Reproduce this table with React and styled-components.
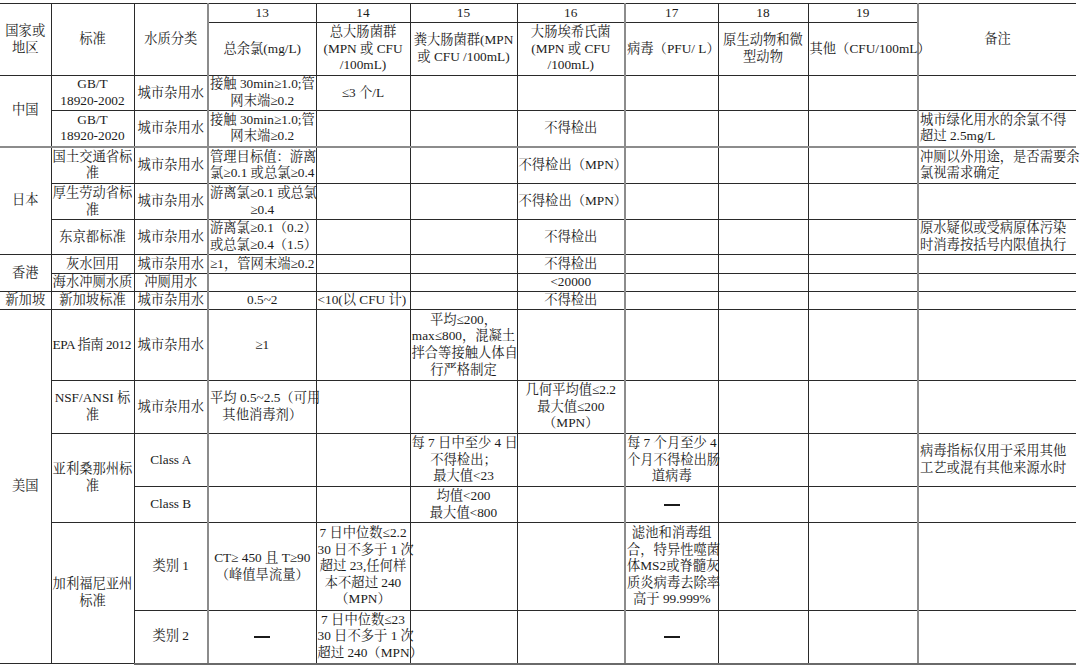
import React from "react";
import styled, { createGlobalStyle } from "styled-components";

const Global = createGlobalStyle`
  html, body { margin: 0; padding: 0; background: #fff; }
  body {
    font-family: "Liberation Serif", "Noto Serif CJK SC", "Noto Sans CJK SC", serif;
    color: #1b1b1b;
  }
`;

const Page = styled.div`
  padding-top: 3px;
  width: 1080px;
`;

const Table = styled.table`
  border-collapse: collapse;
  table-layout: fixed;
  width: 1076px;
  font-size: 13.3px;
  line-height: 16.6px;
`;

const Col = styled.col`
  width: ${(p) => p.$w}px;
  ${(p) => (p.$accent ? "border-left: 2px solid #8c8c8c;" : "")}
`;

const Row = styled.tr`
  height: ${(p) => p.$h}px;
  ${(p) => (p.$accent ? "border-top: 2px solid #8c8c8c;" : "")}
`;

const cellBase = `
  border: 1px solid #2a2a2a;
  padding: 0 1px;
  vertical-align: middle;
  white-space: nowrap;
  font-weight: normal;
  overflow: visible;
  &:first-child { border-left: none; }
  &:last-child { border-right: none; }
`;

const HeadCell = styled.th`
  ${cellBase}
  text-align: ${(p) => p.$align || "center"};
  &.edge-r { border-right: none; }
`;

const Cell = styled.td`
  ${cellBase}
  text-align: ${(p) => p.$align || "center"};
  letter-spacing: ${(p) => (p.$tight ? "-0.4px" : "normal")};
  &.edge-r { border-right: none; }
  &.edge-l { border-left: none; }
`;

const Dash = styled.span`
  display: inline-block;
  width: 16px;
  height: 2px;
  background: #1b1b1b;
  vertical-align: middle;
`;

const Body = styled.tbody`
  tr:last-child td { border-bottom: 2px solid #6a6a6a; }
`;

const Head = styled.thead`
  tr:first-child th { border-top: 1px solid #2a2a2a; }
`;

const E = () => <Cell />;

export default function App() {
  return (
    <Page>
      <Global />
      <Table>
        <colgroup>
          <Col $w={51} />
          <Col $w={83} />
          <Col $w={74} />
          <Col $w={108} $accent />
          <Col $w={94} />
          <Col $w={107} />
          <Col $w={108} />
          <Col $w={93} $accent />
          <Col $w={90} />
          <Col $w={110} />
          <Col $w={158} $accent />
        </colgroup>
        <Head>
          <Row $h={19}>
            <HeadCell rowSpan={2}>国家或<br />地区</HeadCell>
            <HeadCell rowSpan={2}>标准</HeadCell>
            <HeadCell rowSpan={2}>水质分类</HeadCell>
            <HeadCell>13</HeadCell>
            <HeadCell>14</HeadCell>
            <HeadCell>15</HeadCell>
            <HeadCell>16</HeadCell>
            <HeadCell>17</HeadCell>
            <HeadCell>18</HeadCell>
            <HeadCell>19</HeadCell>
            <HeadCell rowSpan={2} className="edge-r">备注</HeadCell>
          </Row>
          <Row $h={53}>
            <HeadCell>总余氯(mg/L)</HeadCell>
            <HeadCell>总大肠菌群<br />(MPN 或 CFU<br />/100mL)</HeadCell>
            <HeadCell>粪大肠菌群(MPN<br />或 CFU /100mL)</HeadCell>
            <HeadCell>大肠埃希氏菌<br />(MPN 或 CFU<br />/100mL)</HeadCell>
            <HeadCell $align="left">病毒（PFU/ L）</HeadCell>
            <HeadCell>原生动物和微<br />型动物</HeadCell>
            <HeadCell $align="left">其他（CFU/100mL）</HeadCell>
          </Row>
        </Head>
        <Body>
          <Row $h={35}>
            <Cell rowSpan={2}>中国</Cell>
            <Cell>GB/T<br />18920-2002</Cell>
            <Cell>城市杂用水</Cell>
            <Cell>接触 30min≥1.0;管<br />网末端≥0.2</Cell>
            <Cell>≤3 个/L</Cell>
            <E /><E /><E /><E /><E />
            <Cell className="edge-r" />
          </Row>
          <Row $h={36}>
            <Cell>GB/T<br />18920-2020</Cell>
            <Cell>城市杂用水</Cell>
            <Cell>接触 30min≥1.0;管<br />网末端≥0.2</Cell>
            <E /><E />
            <Cell>不得检出</Cell>
            <E /><E /><E />
            <Cell $align="left" className="edge-r">城市绿化用水的余氯不得<br />超过 2.5mg/L</Cell>
          </Row>
          <Row $h={37} $accent>
            <Cell rowSpan={3} className="edge-l">日本</Cell>
            <Cell>国土交通省标<br />准</Cell>
            <Cell>城市杂用水</Cell>
            <Cell>管理目标值：游离<br />氯≥0.1 或总氯≥0.4</Cell>
            <E /><E />
            <Cell $align="left">不得检出（MPN）</Cell>
            <E /><E /><E />
            <Cell $align="left" className="edge-r">冲厕以外用途，是否需要余<br />氯视需求确定</Cell>
          </Row>
          <Row $h={36}>
            <Cell>厚生劳动省标<br />准</Cell>
            <Cell>城市杂用水</Cell>
            <Cell>游离氯≥0.1 或总氯<br />≥0.4</Cell>
            <E /><E />
            <Cell $align="left">不得检出（MPN）</Cell>
            <E /><E /><E />
            <Cell className="edge-r" />
          </Row>
          <Row $h={35}>
            <Cell>东京都标准</Cell>
            <Cell>城市杂用水</Cell>
            <Cell $align="left">游离氯≥0.1（0.2）<br />或总氯≥0.4（1.5）</Cell>
            <E /><E />
            <Cell>不得检出</Cell>
            <E /><E /><E />
            <Cell $align="left" className="edge-r">原水疑似或受病原体污染<br />时消毒按括号内限值执行</Cell>
          </Row>
          <Row $h={19}>
            <Cell rowSpan={2} className="edge-l">香港</Cell>
            <Cell>灰水回用</Cell>
            <Cell>城市杂用水</Cell>
            <Cell>≥1，管网末端≥0.2</Cell>
            <E /><E />
            <Cell>不得检出</Cell>
            <E /><E /><E />
            <Cell className="edge-r" />
          </Row>
          <Row $h={18}>
            <Cell>海水冲厕水质</Cell>
            <Cell>冲厕用水</Cell>
            <E /><E /><E />
            <Cell>{"<20000"}</Cell>
            <E /><E /><E />
            <Cell className="edge-r" />
          </Row>
          <Row $h={18}>
            <Cell className="edge-l">新加坡</Cell>
            <Cell>新加坡标准</Cell>
            <Cell>城市杂用水</Cell>
            <Cell>0.5~2</Cell>
            <Cell $align="left">{"<10(以 CFU 计)"}</Cell>
            <E />
            <Cell>不得检出</Cell>
            <E /><E /><E />
            <Cell className="edge-r" />
          </Row>
          <Row $h={71}>
            <Cell rowSpan={6} className="edge-l">美国</Cell>
            <Cell $align="left" $tight>EPA 指南 2012</Cell>
            <Cell>城市杂用水</Cell>
            <Cell>≥1</Cell>
            <E />
            <Cell>平均≤200，<br />max≤800，混凝土<br />拌合等接触人体自<br />行严格制定</Cell>
            <E /><E /><E /><E />
            <Cell className="edge-r" />
          </Row>
          <Row $h={53}>
            <Cell>NSF/ANSI 标<br />准</Cell>
            <Cell>城市杂用水</Cell>
            <Cell>平均 0.5~2.5（可用<br />其他消毒剂）</Cell>
            <E /><E />
            <Cell>几何平均值≤2.2<br />最大值≤200<br />（MPN）</Cell>
            <E /><E /><E />
            <Cell className="edge-r" />
          </Row>
          <Row $h={53}>
            <Cell rowSpan={2}>亚利桑那州标<br />准</Cell>
            <Cell>Class A</Cell>
            <E /><E />
            <Cell>每 7 日中至少 4 日<br />不得检出；<br />最大值{"<23"}</Cell>
            <E />
            <Cell>每 7 个月至少 4<br />个月不得检出肠<br />道病毒</Cell>
            <E /><E />
            <Cell $align="left" className="edge-r">病毒指标仅用于采用其他<br />工艺或混有其他来源水时</Cell>
          </Row>
          <Row $h={36}>
            <Cell>Class B</Cell>
            <E /><E />
            <Cell>均值{"<200"}<br />最大值{"<800"}</Cell>
            <E />
            <Cell><Dash role="img" aria-label="—" /></Cell>
            <E /><E />
            <Cell className="edge-r" />
          </Row>
          <Row $h={88}>
            <Cell rowSpan={2}>加利福尼亚州<br />标准</Cell>
            <Cell>类别 1</Cell>
            <Cell>CT≥ 450 且 T≥90<br />（峰值旱流量）</Cell>
            <Cell>7 日中位数≤2.2<br />30 日不多于 1 次<br />超过 23,任何样<br />本不超过 240<br />（MPN）</Cell>
            <E /><E />
            <Cell>滤池和消毒组<br />合，特异性噬菌<br />体MS2或脊髓灰<br />质炎病毒去除率<br />高于 99.999%</Cell>
            <E /><E />
            <Cell className="edge-r" />
          </Row>
          <Row $h={53}>
            <Cell>类别 2</Cell>
            <Cell><Dash role="img" aria-label="—" /></Cell>
            <Cell>7 日中位数≤23<br />30 日不多于 1 次<br />超过 240（MPN）</Cell>
            <E /><E />
            <Cell><Dash role="img" aria-label="—" /></Cell>
            <E /><E />
            <Cell className="edge-r" />
          </Row>
        </Body>
      </Table>
    </Page>
  );
}
